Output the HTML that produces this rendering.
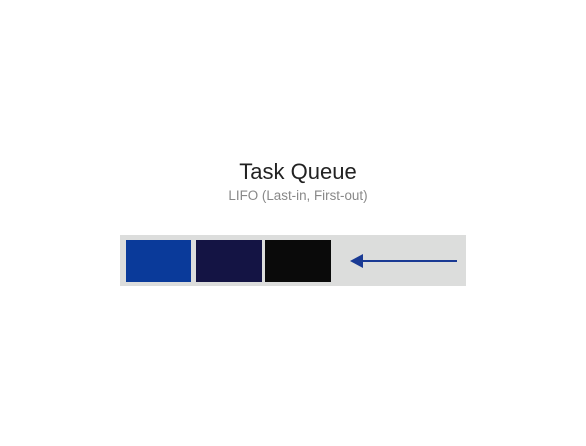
<!DOCTYPE html>
<html><head><style>
body{margin:0;width:586px;height:446px;background:#fff;position:relative;overflow:hidden;font-family:"Liberation Sans",sans-serif}
.t{position:absolute;left:5px;width:586px;text-align:center;top:159px;font-size:22px;color:#222}
.s{position:absolute;left:5px;width:586px;text-align:center;top:188px;font-size:13.4px;color:#888}
.bar{position:absolute;left:120px;top:235px;width:346px;height:51px;background:#dcdddc}
.b{position:absolute;top:5px;height:42px}
</style></head><body>
<div class="t">Task Queue</div>
<div class="s">LIFO (Last-in, First-out)</div>
<div class="bar">
<div class="b" style="left:6px;width:65px;background:#0a3a9a"></div>
<div class="b" style="left:76px;width:66px;background:#141444"></div>
<div class="b" style="left:145px;width:66px;background:#0a0a0a"></div>
<svg style="position:absolute;left:0;top:0" width="346" height="51"><line x1="240" y1="26" x2="337" y2="26" stroke="#1a3a94" stroke-width="2"/><polygon points="230,26 243,19 243,33" fill="#1a3a94"/></svg>
</div>
</body></html>
